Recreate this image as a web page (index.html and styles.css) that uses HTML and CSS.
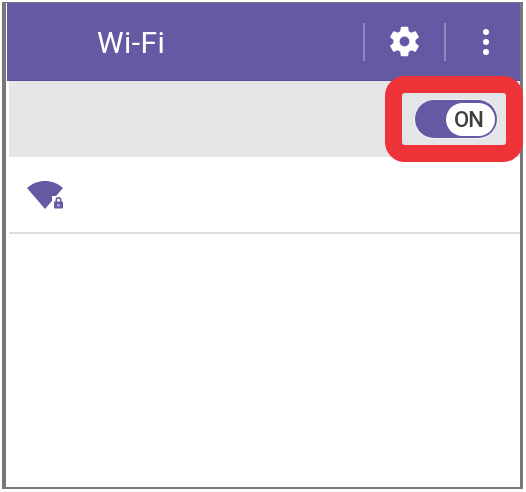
FILE: index.html
```html
<!DOCTYPE html>
<html lang="en">
<head>
    <meta charset="UTF-8">
    <meta name="viewport" content="width=device-width, initial-scale=1.0">
    <title>Wi-Fi</title>
    <link rel="stylesheet" href="styles.css">
</head>
<body>
    <div class="phone">
        <header class="app-bar">
            <h1 class="app-title">Wi-Fi</h1>
            <span class="bar-divider"></span>
            <div class="bar-button bar-button-gear">
                <svg class="gear-icon" viewBox="0 0 24 24" aria-hidden="true">
                    <path d="M19.14 12.94c.04-.3.06-.61.06-.94s-.02-.64-.07-.94l2.03-1.58a.5.5 0 0 0 .12-.61l-1.92-3.32a.5.5 0 0 0-.59-.22l-2.39.96a7 7 0 0 0-1.62-.94l-.36-2.54a.48.48 0 0 0-.48-.41h-3.84a.47.47 0 0 0-.47.41l-.36 2.54c-.59.24-1.13.57-1.62.94l-2.39-.96a.48.48 0 0 0-.59.22L2.74 8.87a.47.47 0 0 0 .12.61l2.03 1.58c-.05.3-.09.63-.09.94s.02.64.07.94l-2.03 1.58a.5.5 0 0 0-.12.61l1.92 3.32c.12.22.37.29.59.22l2.39-.96c.5.38 1.03.7 1.62.94l.36 2.54c.05.24.24.41.48.41h3.84c.24 0 .44-.17.47-.41l.36-2.54a7 7 0 0 0 1.62-.94l2.39.96c.22.08.47 0 .59-.22l1.92-3.32a.46.46 0 0 0-.12-.61l-2.01-1.58zM12 15.2A3.200 3.200 0 1 1 12 8.800a3.200 3.200 0 0 1 0 6.400z"/>
                </svg>
            </div>
            <span class="bar-divider"></span>
            <div class="bar-button bar-button-more">
                <span class="more-dot"></span>
                <span class="more-dot"></span>
                <span class="more-dot"></span>
            </div>
        </header>

        <div class="switch-row">
            <div class="switch">
                <span class="switch-knob">ON</span>
            </div>
        </div>

        <div class="network-row">
            <svg class="network-icon" viewBox="0 0 40 30" aria-hidden="true">
                <path class="network-wedge" d="M1 9C6 4.500 12.500 2 19 2S32 4.500 37 9L19 30z"/>
                <path class="network-lock-cut" d="M26 17h13v13H26z"/>
                <path class="network-lock" d="M29 22.500h.5v-1.500a3 3 0 0 1 6 0v1.500h.5a1 1 0 0 1 1 1v5a1 1 0 0 1-1 1h-7a1 1 0 0 1-1-1v-5a1 1 0 0 1 1-1zm2-0h3v-1.500a1.500 1.500 0 0 0-3 0z"/>
                <path class="network-keyhole" d="M31 25h3v2.500h-3z"/>
            </svg>
        </div>

        <div class="highlight"></div>
    </div>
</body>
</html>
```

FILE: styles.css
```css
body {
    margin: 0;
    background-color: #fff;
    font-family: Roboto, "Liberation Sans", sans-serif;
}
.phone {
    position: relative;
    box-sizing: border-box;
    width: 521px;
    height: 487px;
    margin: 2px 0 0 2px;
    border-style: solid;
    border-color: #77787b;
    border-width: 1px 3px 2px 4px;
    background-color: #fff;
}
.app-bar {
    display: flex;
    align-items: center;
    box-sizing: border-box;
    height: 78px;
    margin-left: 1px;
    border-bottom: 1px solid #5b4f9b;
    background-color: #6459a3;
    color: #fff;
}
.app-title {
    flex: 1;
    margin: 2px 0 0 90px;
    font-size: 30px;
    font-weight: 400;
    letter-spacing: 0.4px;
    filter: blur(0.5px);
}
.bar-divider {
    width: 2px;
    height: 38px;
    background-color: #8f88bd;
}
.bar-button {
    display: flex;
    align-items: center;
    justify-content: center;
}
.bar-button-gear {
    width: 79px;
}
.gear-icon {
    width: 37px;
    height: 37px;
    fill: #fff;
    filter: blur(0.5px);
}
.bar-button-more {
    flex-direction: column;
    gap: 4px;
    width: 68px;
    padding-left: 6px;
}
.more-dot {
    width: 6px;
    height: 6px;
    border-radius: 50%;
    background-color: #fff;
}
.switch-row {
    display: flex;
    justify-content: flex-end;
    align-items: center;
    height: 76px;
    margin-left: 3px;
    padding-right: 23px;
    background-color: #e4e5e6;
}
.switch {
    display: flex;
    justify-content: flex-end;
    align-items: center;
    box-sizing: border-box;
    width: 82px;
    height: 38px;
    padding-right: 2px;
    border-radius: 19px;
    background-color: #6459a3;
    box-shadow: 0 0 0 1px #f1f1f1;
}
.switch-knob {
    display: flex;
    justify-content: center;
    align-items: center;
    box-sizing: border-box;
    width: 49px;
    height: 33px;
    padding-right: 4px;
    border-radius: 17px;
    background-color: #fff;
    color: #3f3f3f;
    font-size: 22px;
    font-weight: 500;
    letter-spacing: -1px;
    filter: blur(0.5px);
}
.network-row {
    display: flex;
    align-items: center;
    height: 75px;
    margin-left: 3px;
    padding-left: 17px;
    border-bottom: 2px solid #dcdddd;
}
.network-icon {
    width: 40px;
    height: 30px;
    margin-top: -1px;
    filter: blur(0.5px);
}
.network-wedge {
    fill: #6459a3;
}
.network-lock-cut {
    fill: #fff;
}
.network-lock {
    fill: #6459a3;
}
.network-keyhole {
    fill: #a9a3cf;
}
/* red callout round the switch */
.highlight {
    position: absolute;
    top: 73px;
    right: -3px;
    box-sizing: border-box;
    width: 138px;
    height: 86px;
    border-style: solid;
    border-color: #ee3338;
    border-width: 17px;
    border-radius: 20px;
}
```
